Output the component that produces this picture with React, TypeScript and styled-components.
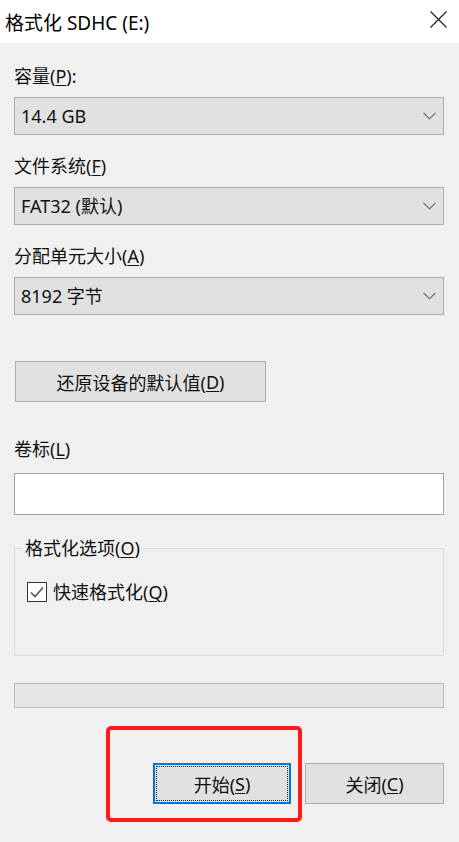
import React from 'react';
import styled, { createGlobalStyle } from 'styled-components';

const GlobalStyle = createGlobalStyle`
  html, body {
    margin: 0;
    padding: 0;
    background: #f0f0f0;
  }
  body {
    font-family: "Noto Sans", "Noto Sans CJK SC", sans-serif;
    font-size: 18px;
    color: #111;
  }
`;

const Dialog = styled.div`
  width: 459px;
  height: 842px;
  background: #f0f0f0;
  display: flex;
  flex-direction: column;
`;

const TitleBar = styled.div`
  height: 43px;
  background: #fff;
  display: flex;
  align-items: center;
  justify-content: space-between;
  padding: 0 12px 0 5px;
  box-sizing: border-box;
  font-size: 19px;
  color: #000;
`;

const CloseBtn = styled.div`
  width: 18px;
  height: 18px;
  display: flex;
  align-items: center;
  justify-content: center;
  margin-top: -4px;
`;

const Body = styled.div`
  padding: 21px 15px 0 14px;
  display: flex;
  flex-direction: column;
`;

const Label = styled.div<{ $gap?: number }>`
  line-height: 24px;
  height: 24px;
  margin-bottom: ${p => p.$gap ?? 9}px;
  white-space: nowrap;
`;

const Key = styled.span`
  text-decoration: underline;
  text-underline-offset: 2px;
  text-decoration-thickness: 1px;
`;

const Field = styled.div<{ $top?: number; $bottom?: number }>`
  display: flex;
  flex-direction: column;
  margin-top: ${p => p.$top ?? 0}px;
  margin-bottom: ${p => p.$bottom ?? 19}px;
`;

const Select = styled.div`
  height: 38px;
  box-sizing: border-box;
  border: 1px solid #adadad;
  background: #e1e1e1;
  display: flex;
  align-items: center;
  justify-content: space-between;
  padding: 0 7px 0 6px;
  line-height: 1;
`;

const Button = styled.div<{ $width: number }>`
  width: ${p => p.$width}px;
  height: 41px;
  box-sizing: border-box;
  border: 1px solid #adadad;
  background: #e1e1e1;
  display: flex;
  align-items: center;
  justify-content: center;
  position: relative;
`;

const DefaultButton = styled(Button)`
  border: 2px solid #0078d7;
  &::after {
    content: '';
    position: absolute;
    inset: 1px;
    border: 1px dotted #222;
  }
`;

const ResetButton = styled(Button)`
  margin: 46px 0 0 1px;
`;

const TextBox = styled.div`
  height: 42px;
  box-sizing: border-box;
  border: 1px solid #a0a0a0;
  background: #fff;
`;

const Group = styled.fieldset`
  margin: 21px 0 0 0;
  border: 1px solid #dcdcdc;
  padding: 20px 12px 0 12px;
  height: 120px;
  box-sizing: border-box;
  min-inline-size: 0;
`;

const Legend = styled.legend`
  padding: 0 2px;
  margin-left: -4px;
  line-height: 24px;
`;

const CheckRow = styled.div`
  display: flex;
  align-items: center;
  gap: 6px;
  line-height: 24px;
`;

const CheckBox = styled.div`
  width: 20px;
  height: 20px;
  box-sizing: border-box;
  border: 1px solid #333;
  background: #fff;
  display: flex;
  align-items: center;
  justify-content: center;
`;

const Progress = styled.div`
  margin-top: 27px;
  height: 25px;
  box-sizing: border-box;
  border: 1px solid #bcbcbc;
  background: #e6e6e6;
`;

const ButtonRow = styled.div`
  margin-top: 55px;
  display: flex;
  justify-content: flex-end;
  gap: 14px;
`;

const Anchor = styled.div`
  position: relative;
`;

const Highlight = styled.div`
  position: absolute;
  top: -37px;
  left: -47px;
  width: 196px;
  height: 96px;
  box-sizing: border-box;
  border: 4px solid #ff1a1a;
  border-radius: 5px;
  pointer-events: none;
`;

const Chevron = () => (
  <svg width="13" height="8" viewBox="0 0 13 8">
    <path d="M0.5 0.8 L6.5 6.8 L12.5 0.8" fill="none" stroke="#606060" strokeWidth="1.1" />
  </svg>
);

function Combo({ value }: { value: string }) {
  return (
    <Select>
      <span>{value}</span>
      <Chevron />
    </Select>
  );
}

export default function App() {
  return (
    <>
      <GlobalStyle />
      <Dialog>
        <TitleBar>
          <span>格式化 SDHC (E:)</span>
          <CloseBtn>
            <svg width="17" height="17" viewBox="0 0 17 17">
              <path d="M0.5 0.5 L16.5 16.5 M16.5 0.5 L0.5 16.5" stroke="#222" strokeWidth="1.2" />
            </svg>
          </CloseBtn>
        </TitleBar>
        <Body>
          <Field>
            <Label>容量(<Key>P</Key>):</Label>
            <Combo value="14.4 GB" />
          </Field>
          <Field>
            <Label>文件系统(<Key>F</Key>)</Label>
            <Combo value="FAT32 (默认)" />
          </Field>
          <Field $bottom={0}>
            <Label>分配单元大小(<Key>A</Key>)</Label>
            <Combo value="8192 字节" />
          </Field>

          <ResetButton $width={251}>还原设备的默认值(<Key>D</Key>)</ResetButton>

          <Field $top={35} $bottom={0}>
            <Label $gap={12}>卷标(<Key>L</Key>)</Label>
            <TextBox />
          </Field>

          <Group>
            <Legend>格式化选项(<Key>O</Key>)</Legend>
            <CheckRow>
              <CheckBox>
                <svg width="14" height="12" viewBox="0 0 14 12">
                  <path d="M1 6.5 L5 10.5 L13 1.5" fill="none" stroke="#555" strokeWidth="1.6" />
                </svg>
              </CheckBox>
              <span>快速格式化(<Key>Q</Key>)</span>
            </CheckRow>
          </Group>

          <Progress />

          <ButtonRow>
            <Anchor>
              <DefaultButton $width={138}>开始(<Key>S</Key>)</DefaultButton>
              <Highlight />
            </Anchor>
            <Button $width={139}>关闭(<Key>C</Key>)</Button>
          </ButtonRow>
        </Body>
      </Dialog>
    </>
  );
}
